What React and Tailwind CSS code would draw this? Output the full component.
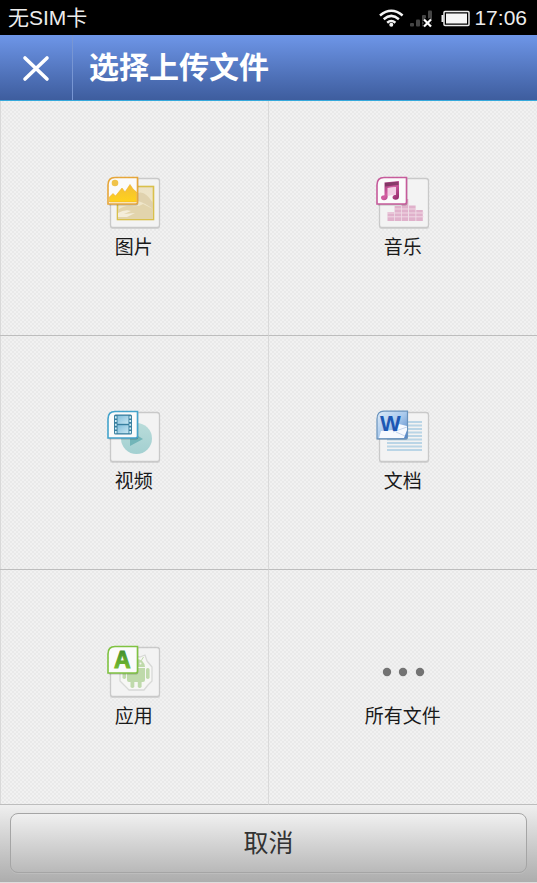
const CATEGORIES = [
  { key: 'image', label: '图片', icon: ImageIcon },
  { key: 'music', label: '音乐', icon: MusicIcon },
  { key: 'video', label: '视频', icon: VideoIcon },
  { key: 'doc',   label: '文档', icon: DocIcon },
  { key: 'app',   label: '应用', icon: AppIcon },
  { key: 'all',   label: '所有文件', icon: DotsIcon },
];

// --- Icons ---
const ICON = { width: 54, height: 54, viewBox: '0 0 54 54', fill: 'none', 'aria-hidden': true };
const BADGE = 'M8 1.5H30.5V26Q30.5 28 28.5 28H1V9Q1 1.5 8 1.5Z';

function Page() {
  return (
    <>
      <rect x="3" y="3" width="50" height="50" rx="2.5" fill="#d6d6d6" />
      <rect x="3.5" y="2.5" width="49" height="49" rx="2.5" fill="#f3f3f3" stroke="#c9c9c9" strokeWidth="1.3" />
    </>
  );
}

function Badge({ color, fill = '#fbfbfb' }) {
  return (
    <>
      <path d={BADGE} transform="translate(0.8 1.4)" fill="#000" opacity=".22" />
      <path d={BADGE} fill={fill} stroke={color} strokeWidth="1.6" />
    </>
  );
}

function ImageIcon() {
  return (
    <svg {...ICON}>
      <defs>
        <linearGradient id="sun" x1="0" y1="0" x2="0" y2="1">
          <stop offset="0" stopColor="#f2bd36" />
          <stop offset="1" stopColor="#ffd21c" />
        </linearGradient>
        <linearGradient id="sand" x1="0" y1="0" x2="0" y2="1">
          <stop offset="0" stopColor="#ece2c6" />
          <stop offset="1" stopColor="#f1e9cc" />
        </linearGradient>
      </defs>
      <Page />
      <rect x="10.5" y="10.5" width="36" height="33" fill="url(#sand)" stroke="#d9c04b" strokeWidth="1.6" />
      <path d="M11 34Q18 29 25 30T36 28L46 33V43H11Z" fill="#e2d4ac" />
      <path d="M11 37Q18 33 24 35L17 38L28 37L20 41H11Z" fill="#f4edda" />
      <path d="M31 17Q38 14 46 27V33Q38 27 31 25Z" fill="#dccda7" opacity=".8" />
      <Badge color="#e6a63a" />
      <circle cx="8" cy="7" r="3.3" fill="#f0c34a" />
      <path d="M2.5 26V21L6 17.5L8.5 20L15 12L18 16L23 8.5L26 13L29.5 16V26Z" fill="url(#sun)" stroke="#efae27" strokeWidth=".6" />
    </svg>
  );
}

function MusicIcon() {
  const bars = [[11.5, 36], [18.6, 30], [25.7, 23], [33, 29.5], [40.2, 34]];
  return (
    <svg {...ICON}>
      <defs>
        <linearGradient id="note" x1="0" y1="0" x2="1" y2="1">
          <stop offset="0" stopColor="#8f2b6c" />
          <stop offset=".5" stopColor="#d45fa3" />
          <stop offset="1" stopColor="#8b2264" />
        </linearGradient>
      </defs>
      <Page />
      {bars.map(([x, y]) => (
        <rect key={x} x={x} y={y} width="6.6" height={45 - y} fill="#e0b1cb" />
      ))}
      <path d="M11 40.8H48M11 37H48M18 33H40" stroke="#f2dde8" strokeWidth=".9" />
      <Badge color="#c65b9b" />
      <path d="M8.5 6.5L23 5V20.5Q23 23.8 19.6 23.8Q16.5 23.6 16.5 21.3Q16.8 18.8 20 18.8V11L11.7 12V20.5Q11.5 24.3 8 24.3Q5 24 5 21.5Q5.3 19.2 8.5 19.2Z" fill="url(#note)" />
      <path d="M11.7 12L20 11V18.5L11.7 20Z" fill="#efbddb" opacity=".7" />
      <path d="M9 7L22.5 5.5V9L9 10.5Z" fill="#73315a" opacity=".75" />
    </svg>
  );
}

function VideoIcon() {
  return (
    <svg {...ICON}>
      <defs>
        <linearGradient id="play" x1="0" y1="0" x2="0" y2="1">
          <stop offset="0" stopColor="#b9dcda" />
          <stop offset="1" stopColor="#a3d0d1" />
        </linearGradient>
        <linearGradient id="frame" x1="0" y1="0" x2="1" y2="1">
          <stop offset="0" stopColor="#83bfdc" />
          <stop offset="1" stopColor="#c7e6f2" />
        </linearGradient>
      </defs>
      <Page />
      <circle cx="29.5" cy="28.5" r="15.5" fill="url(#play)" />
      <path d="M23 21L36 29L23 36Z" fill="#72b5b8" />
      <Badge color="#44a3cb" />
      <rect x="7" y="4.5" width="18" height="20" rx="1.5" fill="#387f9f" />
      <rect x="10.5" y="5.8" width="11" height="8" fill="url(#frame)" />
      <rect x="10.5" y="15.2" width="11" height="8" fill="url(#frame)" />
      <path d="M8.8 6.3V23.5M23.2 6.3V23.5" stroke="#d3edf6" strokeWidth="1.7" strokeDasharray="2.1 1.6" />
    </svg>
  );
}

function DocIcon() {
  return (
    <svg {...ICON}>
      <defs>
        <linearGradient id="word" x1="0" y1="0" x2="1" y2="1">
          <stop offset="0" stopColor="#ddebf8" />
          <stop offset=".5" stopColor="#a9c9ec" />
          <stop offset="1" stopColor="#4c80c4" />
        </linearGradient>
      </defs>
      <Page />
      <path d="M11 12H46M11 15.5H46M11 19H46M11 22.5H46M11 26H46M11 29.5H46M11 33H46M11 36.5H46M11 40H46" stroke="#bad5e6" strokeWidth="1.8" />
      <path d="M8 2.3H32V27Q32 29.8 30 29.8H1.5V9Q1.5 2.3 8 2.3Z" fill="#000" opacity=".2" />
      <path d="M8 1.2H31.5V26.5Q31.5 28.8 29.5 28.8H1V9Q1 1.2 8 1.2Z" fill="url(#word)" stroke="#6993bd" strokeWidth="1.2" />
      <path d="M3 28L5 21L18 20L23 14L31 16V20L28 28Z" fill="#f7faff" />
      <path d="M17 22L31 17M20 22L29 26" stroke="#b8cce7" strokeWidth=".8" />
      <text x="4" y="21" fontFamily="Liberation Sans, sans-serif" fontSize="22" fontWeight="700" fill="#1c58b4">W</text>
    </svg>
  );
}

function AppIcon() {
  return (
    <svg {...ICON}>
      <defs>
        <linearGradient id="letter" x1="0" y1="0" x2="0" y2="1">
          <stop offset="0" stopColor="#37852c" />
          <stop offset="1" stopColor="#83c72f" />
        </linearGradient>
      </defs>
      <Page />
      <path d="M22 13L26 11L33 12L38 10L40 16L45 22V36L41 40L37 45H22L17 40L13 36V24L17 20Z" fill="#f7f7f5" stroke="#d8d9d7" strokeWidth="1.3" strokeLinejoin="round" />
      <g fill="#bfdaab">
        <path d="M20 22Q21 14 29 14T38 22Z" />
        <path d="M20 23H38V35Q38 37 36 37H22Q20 37 20 35Z" />
        <rect x="15.5" y="23" width="3.6" height="11" rx="1.8" />
        <rect x="39" y="23" width="3.6" height="11" rx="1.8" />
        <rect x="23.5" y="35" width="3.8" height="8" rx="1.8" />
        <rect x="30.8" y="35" width="3.8" height="8" rx="1.8" />
      </g>
      <path d="M34 16L36.5 12" stroke="#bfdaab" />
      <circle cx="33.5" cy="18.5" r="1" fill="#f7f7f5" />
      <Badge color="#7fc241" />
      <text x="7" y="23" fontFamily="Liberation Sans, sans-serif" fontSize="23" fontWeight="700" fill="url(#letter)" stroke="url(#letter)" strokeWidth="1">A</text>
    </svg>
  );
}

function DotsIcon() {
  return (
    <svg {...ICON}>
      <g fill="#737373">
        <circle cx="11" cy="27" r="4.2" />
        <circle cx="27" cy="27" r="4.2" />
        <circle cx="44" cy="27" r="4.2" />
      </g>
    </svg>
  );
}

function StatusIcons() {
  return (
    <svg width="92" height="24" viewBox="0 0 92 24" fill="none" aria-hidden="true">
      {/* Wifi */}
      <g stroke="#f5f5f5" strokeWidth="2.5">
        <path d="M2 9.5Q13.3 0 24.6 9.5" />
        <path d="M5.7 13.2Q13.3 6.6 20.9 13.2" />
        <path d="M9.2 16.8Q13.3 13.2 17.4 16.8" />
      </g>
      <circle cx="13.3" cy="18.8" r="2" fill="#f5f5f5" />
      {/* Signal */}
      <g fill="#454545">
        <rect x="32" y="17" width="4" height="3.5" rx="1" />
        <rect x="38" y="13.5" width="4" height="7" rx="1" />
        <rect x="44" y="9" width="4" height="11.5" rx="1" />
        <rect x="50" y="4.5" width="4" height="16" rx="1" />
      </g>
      <path d="M46 13.5L53 20.5M53 13.5L46 20.5" stroke="#000" strokeWidth="5" />
      <path d="M46 13.5L53 20.5M53 13.5L46 20.5" stroke="#fff" strokeWidth="2.2" />
      {/* Battery */}
      <rect x="66" y="5.5" width="25" height="14" rx="1" stroke="#ececec" strokeWidth="1.5" />
      <rect x="68" y="7.5" width="21" height="10" fill="#f5f5f5" />
      <path d="M65.5 9H63.5V16H65.5Z" fill="#ececec" />
    </svg>
  );
}

export default function App() {
  return (
    <div className="flex min-h-screen flex-col bg-[#ededed] font-['Liberation_Sans','Noto_Sans_CJK_SC',sans-serif]">

      {/* Status bar */}
      <div className="flex h-[35px] items-center justify-between bg-black pr-[10px] pl-2 text-[21px] leading-6 text-[#ececec]">
        <span>无SIM卡</span>
        <div className="flex items-center gap-1">
          <StatusIcons />
          <span>17:06</span>
        </div>
      </div>

      {/* Header */}
      <header className="flex h-[66px] items-stretch border-b border-[#36a9dc] bg-linear-to-b from-[#6e96e8] to-[#3e5d9e]">
        <button type="button" aria-label="关闭" className="flex w-[73px] items-center justify-center border-r border-[#7896d3]">
          <svg width="28" height="28" viewBox="0 0 28 28" fill="none" stroke="#fff" strokeWidth="3.6" strokeLinecap="round" aria-hidden="true">
            <path d="M3 4L25 25M25 4L3 25" />
          </svg>
        </button>
        <h1 className="flex items-center pl-4 text-[30px] leading-9 font-bold text-white">选择上传文件</h1>
      </header>

      {/* Categories */}
      <main className="grid flex-1 auto-rows-fr grid-cols-2 bg-[#ededed] bg-[repeating-conic-gradient(#e9e9e9_0_25%,#f1f1f1_0_50%)] bg-[length:4px_4px] shadow-[inset_1px_0_0_#d9d9d9]">
        {CATEGORIES.map(c => (
          <button
            key={c.key}
            type="button"
            className="flex flex-col items-center justify-center gap-1.5 border-b border-[#bdbdbd] py-6 text-[19px] leading-6 text-[#1a1a1a] odd:border-r odd:border-r-[#d9d9d9]"
          >
            <c.icon />
            <span>{c.label}</span>
          </button>
        ))}
      </main>

      {/* Footer */}
      <footer className="border-b border-[#dedede] bg-linear-to-b from-[#efefef] to-[#adadad] px-[10px] pt-2 pb-[9px]">
        <button
          type="button"
          className="h-[60px] w-full rounded-lg border border-[#a5a5a5] bg-linear-to-b from-[#f0f0f0] to-[#b9b9b9] text-[25px] leading-8 text-[#333] shadow-[0_1px_0_#bdbdbd]"
        >
          取消
        </button>
      </footer>

    </div>
  );
}
